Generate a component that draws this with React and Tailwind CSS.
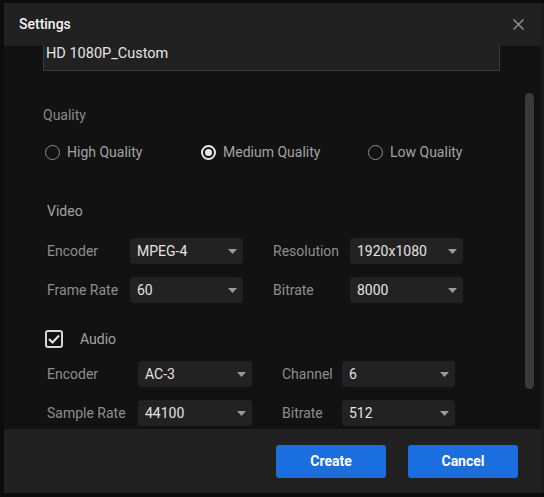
import React from 'react'

function Select({ value, w = 'w-[113px]' }) {
  return (
    <div className={`${w} h-[26px] rounded-[4px] bg-[#222222] flex items-center justify-between pl-[7px] pr-[6px]`}>
      <span className="text-[14px] text-[#e2e2e2]">{value}</span>
      <svg width="9" height="5" viewBox="0 0 9 5">
        <path d="M0 0 L9 0 L4.5 5 Z" fill="#9a9a9a" />
      </svg>
    </div>
  )
}

function Radio({ label, checked, w }) {
  return (
    <div className={`${w} flex items-center gap-[7px]`}>
      {checked ? (
        <span className="w-[15px] h-[15px] rounded-full border-2 border-[#e6e6e6] flex items-center justify-center">
          <span className="w-[7px] h-[7px] rounded-full bg-[#e6e6e6]" />
        </span>
      ) : (
        <span className="w-[15px] h-[15px] rounded-full border-[1.5px] border-[#8c8c8c]" />
      )}
      <span className="text-[14px] text-[#a3a3a3]">{label}</span>
    </div>
  )
}

function Row({ l1, v1, l2, v2, c1, c2, sw1 }) {
  return (
    <div className="flex items-center">
      <span className={`${c1} text-[14px] text-[#8e8e8e]`}>{l1}</span>
      <Select value={v1} w={sw1} />
      <span className={`${c2} ml-[30px] text-[14px] text-[#8e8e8e]`}>{l2}</span>
      <Select value={v2} />
    </div>
  )
}

export default function App() {
  return (
    <div className="w-[544px] h-[497px] bg-[#0c0c0c] overflow-hidden flex" style={{ fontFamily: 'Roboto, "Liberation Sans", sans-serif' }}>
      <div className="ml-[4px] mt-[3px] w-[537px] h-[490px] flex flex-col bg-[#121212]">
        {/* header */}
        <div className="h-[43px] shrink-0 bg-[#212121] flex items-center justify-between pl-[15px] pr-[17px]">
          <span className="text-[14px] font-medium text-[#f2f2f2]">Settings</span>
          <svg width="11" height="11" viewBox="0 0 11 11">
            <path d="M0.5 0.5 L10.5 10.5 M10.5 0.5 L0.5 10.5" stroke="#8f8f8f" strokeWidth="1.5" />
          </svg>
        </div>

        {/* scroll body */}
        <div className="relative flex-1 overflow-hidden">
          <div className="-mt-[11px] pl-[39px] pr-[41px]">
            <div className="h-[36px] border border-[#3a3a3a] bg-[#212121] flex items-center pl-[2px] pt-[1px]">
              <span className="text-[14.5px] leading-[16px] text-[#e4e4e4]">HD 1080P_Custom</span>
            </div>

            <div className="mt-[34px] text-[14px] leading-[20px] text-[#8a8a8a]">Quality</div>

            <div className="mt-[17px] h-[20px] flex items-center pl-[2px]">
              <Radio label="High Quality" w="w-[156px]" />
              <Radio label="Medium Quality" checked w="w-[167px]" />
              <Radio label="Low Quality" w="w-[120px]" />
            </div>

            <div className="pl-[4px]">
              <div className="mt-[39px] text-[14px] leading-[20px] text-[#a3a3a3]">Video</div>

              <div className="mt-[17px] flex flex-col gap-[13px]">
                <Row l1="Encoder" v1="MPEG-4" l2="Resolution" v2="1920x1080" c1="w-[83px]" c2="w-[77px]" />
                <Row l1="Frame Rate" v1="60" l2="Bitrate" v2="8000" c1="w-[83px]" c2="w-[77px]" />
              </div>

              <div className="mt-[27px] h-[18px] flex items-center">
                <span className="-ml-[2px] w-[18px] h-[18px] rounded-[3px] border-2 border-[#d6d6d6] flex items-center justify-center">
                  <svg width="12" height="10" viewBox="0 0 12 10">
                    <path d="M1 5 L4.5 8.5 L11 1.5" stroke="#e6e6e6" strokeWidth="2" fill="none" />
                  </svg>
                </span>
                <span className="ml-[17px] text-[14px] text-[#a3a3a3]">Audio</span>
              </div>

              <div className="mt-[13px] flex flex-col gap-[13px]">
                <Row l1="Encoder" v1="AC-3" l2="Channel" v2="6" c1="w-[91px]" c2="w-[60px]" sw1="w-[114px]" />
                <Row l1="Sample Rate" v1="44100" l2="Bitrate" v2="512" c1="w-[91px]" c2="w-[60px]" sw1="w-[114px]" />
              </div>
            </div>
          </div>

          {/* scrollbar */}
          <div className="absolute left-[521px] top-[47px] w-[9px] h-[296px] rounded-full bg-[#3a3a3a]" />
        </div>

        {/* footer */}
        <div className="h-[64px] shrink-0 bg-[#212121] flex items-center justify-end gap-[22px] pr-[23px] pt-[1px]">
          <button className="w-[110px] h-[33px] rounded-[3px] bg-[#1a6ede] text-white text-[14px] font-bold">Create</button>
          <button className="w-[110px] h-[33px] rounded-[3px] bg-[#1a6ede] text-white text-[14px] font-bold">Cancel</button>
        </div>
      </div>
      <div className="mt-[3px] w-[3px] h-[490px] bg-[#1c1c1c]" />
    </div>
  )
}
